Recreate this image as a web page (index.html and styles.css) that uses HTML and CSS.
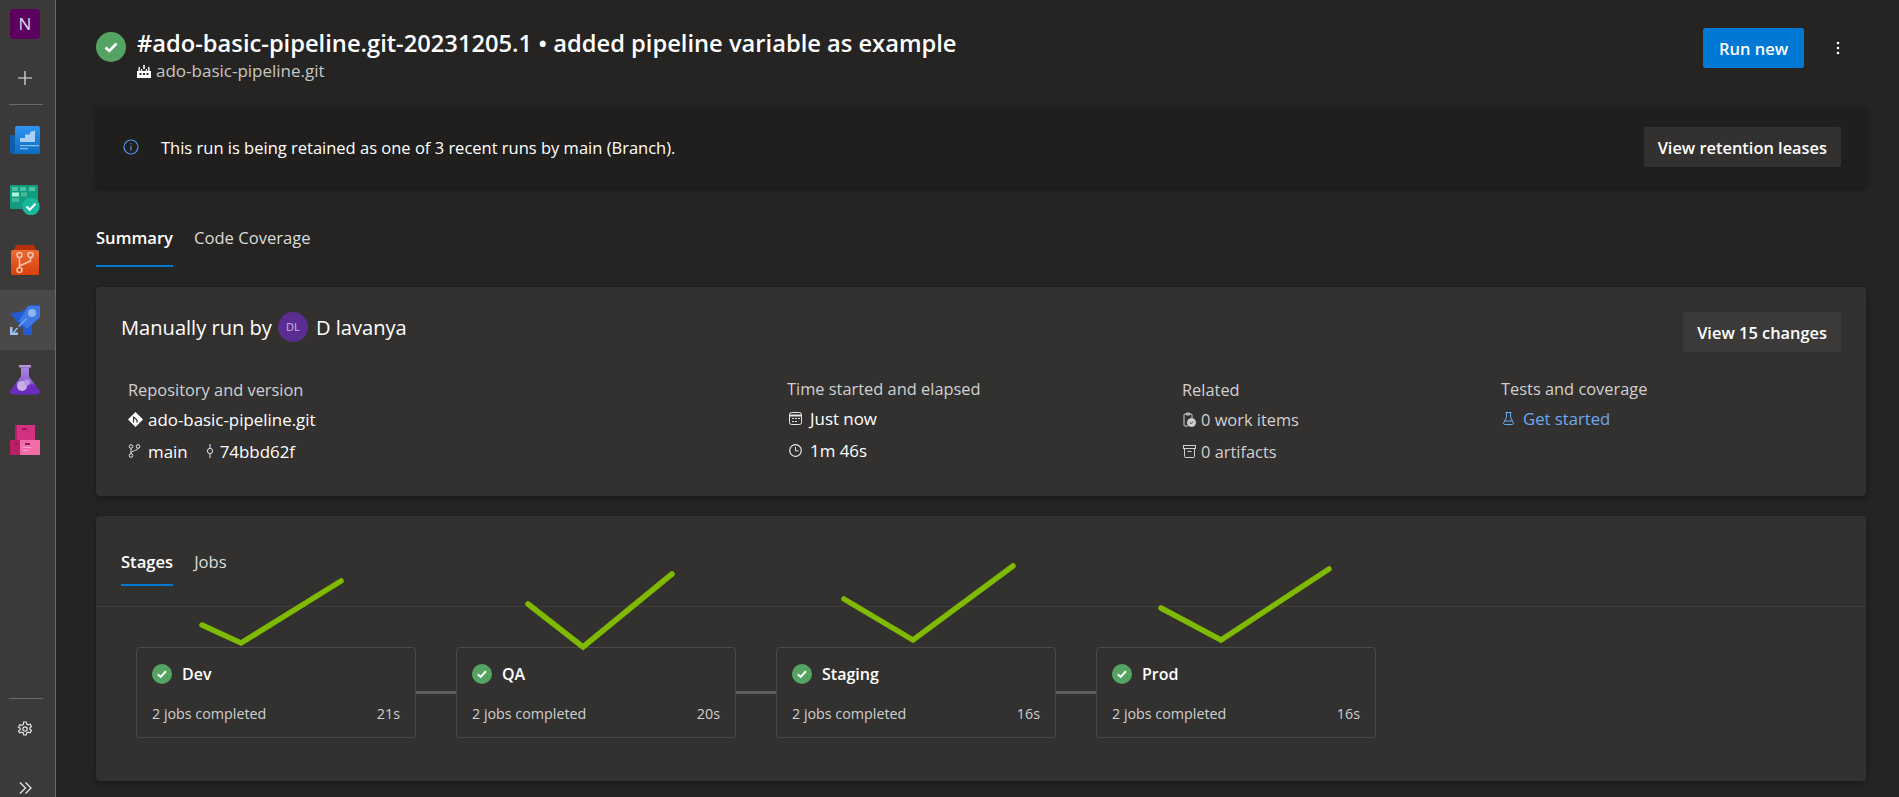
FILE: index.html
```html
<!DOCTYPE html>
<html lang="en">

<head>
    <meta charset="UTF-8">
    <title>ado-basic-pipeline.git run summary</title>
    <link rel="stylesheet" href="styles.css">
</head>

<body>
    <nav class="rail">
        <div class="org">N</div>
        <div class="rail-plus">
            <svg width="14" height="14" viewBox="0 0 14 14"><path d="M7 0v14M0 7h14" stroke="#e6e6e6" stroke-width="1.200" /></svg>
        </div>
        <div class="rail-sep"></div>

        <!-- Overview -->
        <div class="rail-item">
            <svg width="30" height="30" viewBox="0 0 30 30">
                <defs>
                    <linearGradient id="ovr" x1="0" y1="0" x2="0" y2="1">
                        <stop offset="0" stop-color="#2f93f2" />
                        <stop offset="1" stop-color="#0e6cc0" />
                    </linearGradient>
                </defs>
                <path d="M0 10h8v19H2a2 2 0 0 1-2-2z" fill="#0f5ea8" />
                <path d="M5 3a2 2 0 0 1 2-2h21a2 2 0 0 1 2 2v24a2 2 0 0 1-2 2H2a3 3 0 0 0 3-3z" fill="url(#ovr)" />
                <path d="M10 17v-4h5V9.500h5V7l5-1.500V17z" fill="#a9d3f5" />
                <path d="M10 20h19v1.200H10zM10 23h8v1.200h-8z" fill="#84c0f0" />
            </svg>
        </div>

        <!-- Boards -->
        <div class="rail-item">
            <svg width="30" height="30" viewBox="0 0 30 30">
                <rect x="0" y="0" width="28" height="24" rx="1" fill="#119d80" />
                <path d="M2 2h6v4H2zM10 2h6v4h-6zM19 2h6v4h-6z" fill="#4dbfa3" />
                <path d="M2 7.500h7v4H2z" fill="#a8f5de" />
                <path d="M11 7.500h6v4h-6zM2 13h7v4H2z" fill="#45b99c" />
                <circle cx="21" cy="21.500" r="8.700" fill="#18b89b" />
                <path d="M16.500 21.500l3.200 3.200 5.800-6" fill="none" stroke="#fff" stroke-width="2.200" />
            </svg>
        </div>

        <!-- Repos -->
        <div class="rail-item">
            <svg width="30" height="30" viewBox="0 0 30 30">
                <defs>
                    <linearGradient id="rep" x1="0" y1="0" x2="0" y2="1">
                        <stop offset="0" stop-color="#ec6a32" />
                        <stop offset="1" stop-color="#d9400c" />
                    </linearGradient>
                </defs>
                <path d="M4 5l2-5h18l2 5z" fill="#b5300c" />
                <rect x="1" y="5" width="28" height="25" rx="1.500" fill="url(#rep)" />
                <g fill="none" stroke="#f7c4ae" stroke-width="1.500">
                    <circle cx="9.500" cy="10" r="2.500" />
                    <circle cx="9.500" cy="25" r="2.500" />
                    <circle cx="20.500" cy="10" r="2.500" />
                    <path d="M9.500 12.500v10M20.500 12.500v3.500L9.500 21" />
                </g>
            </svg>
        </div>

        <!-- Pipelines -->
        <div class="rail-item rail-active">
            <svg width="30" height="30" viewBox="0 0 30 30">
                <path d="M0 8l11-1L20 0h10v12l-8 8v10h-9v-7l-5-5z" fill="#2459d4" />
                <path d="M18 1h12v11L17 24l-8-8z" fill="#3d78e4" />
                <circle cx="22" cy="8" r="4" fill="#8fb4f2" />
                <path d="M8 21l8-8 1.200 1.200-8 8z" fill="#6f9fee" />
                <path d="M0 22h2.500v5.500H8V30H0z" fill="#9fc0f4" />
                <path d="M2.500 27.500l4.500-5 1 1-4 4.500z" fill="#9fc0f4" />
            </svg>
        </div>

        <!-- Test plans -->
        <div class="rail-item">
            <svg width="30" height="30" viewBox="0 0 30 30">
                <defs>
                    <linearGradient id="tst" x1="0" y1="0" x2="0" y2="1">
                        <stop offset="0" stop-color="#ab86de" />
                        <stop offset=".55" stop-color="#8f60d0" />
                        <stop offset=".68" stop-color="#6b2cc0" />
                        <stop offset="1" stop-color="#6b2cc0" />
                    </linearGradient>
                </defs>
                <rect x="9" y="0" width="12" height="2.500" fill="#b893de" />
                <path d="M11 2.500h8v9l10.500 14a2.500 2.500 0 0 1-2 4h-25a2.500 2.500 0 0 1-2-4L11 11.500z" fill="url(#tst)" />
                <circle cx="12" cy="21" r="5" fill="#c8aeea" />
                <circle cx="17" cy="17.500" r="3" fill="#b698e2" />
            </svg>
        </div>

        <!-- Artifacts -->
        <div class="rail-item">
            <svg width="30" height="30" viewBox="0 0 30 30">
                <rect x="5" y="0" width="20" height="15" fill="#d42f80" />
                <rect x="5" y="0" width="2" height="15" fill="#b81f66" />
                <rect x="0" y="15" width="12" height="15" fill="#b81f66" />
                <rect x="10" y="15" width="20" height="15" fill="#f06da8" />
                <path d="M12 3h5v2h-5zM5 18h3v2H5zM15 18h5v2h-5z" fill="#971855" />
                <path d="M13 22h8v1h-8zM13 25h5v1h-5z" fill="#f7a8cb" />
            </svg>
        </div>

        <div class="rail-bottom">
            <div class="rail-sep rail-sep-low"></div>
            <div class="rail-gear">
                <svg width="16" height="16" viewBox="0 0 16 16" fill="none" stroke="#e6e6e6" stroke-width="1.200">
                    <path d="M6.700 1h2.600l.4 2 1.500.9 2-.7 1.300 2.300-1.600 1.300v1.400l1.600 1.300-1.300 2.300-2-.7-1.500.9-.4 2H6.700l-.4-2-1.500-.9-2 .7L1.500 10l1.600-1.300V7.300L1.500 6l1.300-2.300 2 .7 1.500-.9z" />
                    <circle cx="8" cy="8" r="2.200" />
                </svg>
            </div>
            <div class="rail-expand">
                <svg width="13" height="12" viewBox="0 0 13 12" fill="none" stroke="#e6e6e6" stroke-width="1.300"><path d="M1 .5L6.500 6 1 11.500M6.500 .5L12 6l-5.500 5.500" /></svg>
            </div>
        </div>
    </nav>

    <main class="page">
        <header class="head">
            <svg class="status-big" width="30" height="30" viewBox="0 0 30 30">
                <circle cx="15" cy="15" r="15" fill="#55a362" />
                <path d="M9.500 15.500l3.800 3.500 7.200-7.500" fill="none" stroke="#fff" stroke-width="2.600" />
            </svg>
            <div class="head-text">
                <h1>#ado-basic-pipeline.git-20231205.1 • added pipeline variable as example</h1>
                <div class="head-sub">
                    <svg width="14" height="13" viewBox="0 0 14 13" fill="#fff"><path d="M6.200 0h1.600v4H6.200zM1.500 2h1.400v4H1.500zM11.100 2h1.400v4h-1.400zM3.900 4h1.400v3H3.900zM8.700 4h1.400v3H8.700zM0 6h14v7H0z" /><path d="M2.500 8h2v2h-2zM9.500 8h2v2h-2zM6 8h2v2H6z" fill="#252423" /></svg>
                    <span>ado-basic-pipeline.git</span>
                </div>
            </div>
            <button class="btn-primary">Run new</button>
            <svg class="more" width="4" height="14" viewBox="0 0 4 14" fill="#fff"><circle cx="2" cy="2" r="1.300" /><circle cx="2" cy="7" r="1.300" /><circle cx="2" cy="12" r="1.300" /></svg>
        </header>

        <section class="banner">
            <svg width="16" height="16" viewBox="0 0 16 16" fill="none" stroke="#4f94ef" stroke-width="1.200"><circle cx="8" cy="8" r="7" /><path d="M8 7v4.500M8 4.200v1.400" /></svg>
            <p>This run is being retained as one of 3 recent runs by main (Branch).</p>
            <button class="btn">View retention leases</button>
        </section>

        <div class="tabs page-tabs">
            <span class="tab tab-on">Summary</span>
            <span class="tab">Code Coverage</span>
        </div>

        <section class="card summary">
            <div class="summary-top">
                <div class="run-by">
                    <span>Manually run by</span>
                    <span class="avatar">DL</span>
                    <span>D lavanya</span>
                </div>
                <button class="btn">View 15 changes</button>
            </div>
            <div class="facts">
                <div class="fact fact-repo">
                    <div class="fact-label">Repository and version</div>
                    <div class="fact-row">
                        <svg width="15" height="15" viewBox="0 0 15 15"><path d="M7.500 0L15 7.500 7.500 15 0 7.500z" fill="#fff" /><path d="M5.500 4.500v6M5.500 5l3.500 3v2.500" stroke="#323130" stroke-width="1.200" fill="none" /></svg>
                        <span>ado-basic-pipeline.git</span>
                    </div>
                    <div class="fact-row">
                        <svg class="branch" width="13" height="14" viewBox="0 0 13 14" fill="none" stroke="#e6e6e6"><circle cx="3" cy="2.500" r="1.800" /><circle cx="3" cy="11.500" r="1.800" /><circle cx="10" cy="2.500" r="1.800" /><path d="M3 4.500v5M10 4.500c0 2-7 2-7 5" /></svg>
                        <span>main</span>
                        <svg class="commit" width="8" height="14" viewBox="0 0 8 14" fill="none" stroke="#e6e6e6"><circle cx="4" cy="7" r="2.600" /><path d="M4 0v4.400M4 9.600V14" /></svg>
                        <span>74bbd62f</span>
                    </div>
                </div>
                <div class="fact fact-time">
                    <div class="fact-label">Time started and elapsed</div>
                    <div class="fact-row">
                        <svg width="13" height="13" viewBox="0 0 13 13" fill="none" stroke="#e6e6e6"><rect x=".5" y=".5" width="12" height="12" rx="2" /><path d="M.5 3.500h12" stroke-width="2" /><path d="M3 6.500h2M6 6.500h2M9 6.500h2M3 9.500h2M6 9.500h2" /></svg>
                        <span>Just now</span>
                    </div>
                    <div class="fact-row">
                        <svg width="13" height="13" viewBox="0 0 13 13" fill="none" stroke="#e6e6e6"><circle cx="6.500" cy="6.500" r="5.800" stroke-width="1.200" /><path d="M6.500 3v3.800h3" /></svg>
                        <span>1m 46s</span>
                    </div>
                </div>
                <div class="fact fact-related">
                    <div class="fact-label">Related</div>
                    <div class="fact-row dim">
                        <svg width="13" height="15" viewBox="0 0 13 15" fill="none" stroke="#cfcfcf"><path d="M5 14H2a1 1 0 0 1-1-1V3a1 1 0 0 1 1-1h6a1 1 0 0 1 1 1v3M3.500 1h3v2h-3z" /><circle cx="8.500" cy="10.500" r="4" fill="#cfcfcf" /><path d="M6.800 10.500l1.200 1.200 2-2" stroke="#323130" /></svg>
                        <span>0 work items</span>
                    </div>
                    <div class="fact-row dim">
                        <svg width="13" height="13" viewBox="0 0 13 13" fill="none" stroke="#cfcfcf"><rect x=".5" y=".5" width="12" height="3" /><path d="M1.500 3.500v8a1 1 0 0 0 1 1h8a1 1 0 0 0 1-1v-8M4.500 6.500h4" /></svg>
                        <span>0 artifacts</span>
                    </div>
                </div>
                <div class="fact fact-tests">
                    <div class="fact-label">Tests and coverage</div>
                    <div class="fact-row link">
                        <svg width="11" height="13" viewBox="0 0 11 13" fill="none" stroke="#6ea8ef"><path d="M2.500.5h6M3.500.5v4.500L.7 11a1 1 0 0 0 1 1.500h7.600a1 1 0 0 0 1-1.500L7.500 5V.5M2 9h7" /></svg>
                        <span>Get started</span>
                    </div>
                </div>
            </div>
        </section>

        <section class="card stages">
            <div class="tabs stage-tabs">
                <span class="tab tab-on">Stages</span>
                <span class="tab">Jobs</span>
            </div>
            <div class="stage-list">
                <div class="stage">
                    <div class="stage-name"><svg width="20" height="20" viewBox="0 0 20 20"><circle cx="10" cy="10" r="10" fill="#55a362" /><path d="M5.800 10.300l2.800 2.600 5.300-5.600" fill="none" stroke="#fff" stroke-width="2" /></svg><span>Dev</span></div>
                    <div class="stage-meta"><span>2 jobs completed</span><span>21s</span></div>
                </div>
                <div class="link-line"></div>
                <div class="stage">
                    <div class="stage-name"><svg width="20" height="20" viewBox="0 0 20 20"><circle cx="10" cy="10" r="10" fill="#55a362" /><path d="M5.800 10.300l2.800 2.600 5.300-5.600" fill="none" stroke="#fff" stroke-width="2" /></svg><span>QA</span></div>
                    <div class="stage-meta"><span>2 jobs completed</span><span>20s</span></div>
                </div>
                <div class="link-line"></div>
                <div class="stage">
                    <div class="stage-name"><svg width="20" height="20" viewBox="0 0 20 20"><circle cx="10" cy="10" r="10" fill="#55a362" /><path d="M5.800 10.300l2.800 2.600 5.300-5.600" fill="none" stroke="#fff" stroke-width="2" /></svg><span>Staging</span></div>
                    <div class="stage-meta"><span>2 jobs completed</span><span>16s</span></div>
                </div>
                <div class="link-line"></div>
                <div class="stage">
                    <div class="stage-name"><svg width="20" height="20" viewBox="0 0 20 20"><circle cx="10" cy="10" r="10" fill="#55a362" /><path d="M5.800 10.300l2.800 2.600 5.300-5.600" fill="none" stroke="#fff" stroke-width="2" /></svg><span>Prod</span></div>
                    <div class="stage-meta"><span>2 jobs completed</span><span>16s</span></div>
                </div>
            </div>
        </section>
    </main>

    <!-- Green ticks drawn over the screenshot by hand -->
    <svg class="ticks" width="1899" height="797" viewBox="0 0 1899 797" fill="none" stroke="#7fba00" stroke-width="5.500" stroke-linecap="round" stroke-linejoin="miter">
        <path d="M202 625L241 643L341 581" />
        <path d="M528 604L583 647L672 574" />
        <path d="M844 599L913 640L1013 566" />
        <path d="M1161 608L1221 640L1329 569" />
    </svg>
</body>

</html>
```

FILE: styles.css
```css
html,
body {
    height: 100%;
}

body {
    margin: 0;
    display: flex;
    overflow: hidden;
    background-color: #252423;
    color: #fff;
    font-family: "Open Sans", "Noto Sans", sans-serif;
    font-size: 14px;
}

/* left rail */
.rail {
    width: 55px;
    flex: none;
    display: flex;
    flex-direction: column;
    align-items: center;
    background-color: #3b3a39;
    border-right: 1px solid #6a6968;
}

.org {
    width: 30px;
    height: 30px;
    margin: 9px 5px 0 0;
    border-radius: 4px;
    background-color: #5c0060;
    color: #e8d8ea;
    font-size: 17px;
    line-height: 30px;
    text-align: center;
}

.rail-plus {
    height: 40px;
    margin: 19px 5px 0 0;
    display: flex;
    align-items: center;
}

.rail-sep {
    width: 34px;
    height: 1px;
    flex: none;
    margin: 6px 3px 5px 0;
    background-color: #6a6968;
}

.rail-sep-low {
    margin: 0 3px 0 0;
}

.rail-item {
    width: 100%;
    height: 60px;
    flex: none;
    box-sizing: border-box;
    padding-right: 5px;
    display: flex;
    align-items: center;
    justify-content: center;
}

.rail-active {
    background-color: #4a4948;
}

.rail-bottom {
    margin-top: auto;
    width: 100%;
    display: flex;
    flex-direction: column;
    align-items: center;
}

.rail-gear,
.rail-expand {
    width: 100%;
    box-sizing: border-box;
    padding-right: 5px;
    display: flex;
    align-items: center;
    justify-content: center;
}

.rail-gear {
    height: 60px;
}

.rail-expand {
    height: 18px;
    margin-top: 20px;
}

/* page */
.page {
    flex: 1;
    padding: 0 33px 0 40px;
    min-width: 0;
}

.head {
    display: flex;
    align-items: flex-start;
    height: 107px;
    box-sizing: border-box;
    padding-top: 28px;
}

.status-big {
    flex: none;
    margin: 4px 11px 0 0;
}

.head-text {
    flex: 1;
}

h1 {
    margin: 0;
    font-size: 23.7px;
    line-height: 30px;
    font-weight: 600;
}

.head-sub {
    display: flex;
    align-items: center;
    gap: 5px;
    margin-top: 3px;
    font-size: 17px;
    line-height: 20px;
    color: #c8c6c4;
}

.btn-primary,
.btn {
    border: 0;
    border-radius: 2px;
    font-family: inherit;
    font-weight: 600;
    color: #fff;
    height: 40px;
}

.btn-primary {
    width: 101px;
    background-color: #0078d4;
    font-size: 16.500px;
}

.btn {
    padding: 0 14px;
    background-color: #323130;
    font-size: 16.400px;
}

.more {
    margin: 13px 26px 0 32px;
}

.banner {
    display: flex;
    align-items: center;
    height: 80px;
    padding: 0 25px 0 27px;
    background-color: #201f1e;
    border-radius: 4px;
    box-shadow: 0 2px 6px rgba(0, 0, 0, .35);
}

.banner p {
    flex: 1;
    margin: 0 0 0 22px;
    font-size: 16.500px;
}

.tabs {
    display: flex;
    gap: 21px;
}

.tab {
    display: block;
    font-size: 16.600px;
    line-height: 22px;
    color: #dcdcdc;
}

.tab-on {
    color: #fff;
    font-weight: 600;
    box-shadow: 0 2px 0 #0078d4;
}

.page-tabs {
    height: 100px;
    box-sizing: border-box;
    padding-top: 40px;
}

.page-tabs .tab {
    height: 38px;
}

.card {
    background-color: #323130;
    border-radius: 4px;
    box-shadow: 0 2px 6px rgba(0, 0, 0, .35);
}

.summary {
    height: 209px;
    box-sizing: border-box;
    padding: 25px 25px 0;
}

.summary-top {
    display: flex;
    justify-content: space-between;
    align-items: flex-start;
}

.summary-top .btn {
    background-color: #3b3a39;
}

.run-by {
    display: flex;
    align-items: center;
    gap: 6px;
    font-size: 20.100px;
}

.avatar {
    width: 30px;
    height: 30px;
    margin-right: 2px;
    border-radius: 50%;
    background-color: #5c2d91;
    color: #c8b8e0;
    font-size: 11px;
    line-height: 30px;
    text-align: center;
}

.facts {
    display: flex;
    margin-top: 27px;
}

.fact-label {
    font-size: 16.400px;
    line-height: 22px;
    margin-bottom: 2px;
    color: #d0d0d0;
}

.fact-row {
    display: flex;
    align-items: center;
    gap: 5px;
    height: 32px;
    font-size: 16.900px;
}

.fact-repo {
    width: 659px;
    margin-left: 7px;
}

.branch {
    margin-right: 2px;
}

.commit {
    margin: 0 1px 0 13px;
}

.fact-time {
    width: 395px;
    margin-top: -1px;
}

.fact-time .fact-row {
    gap: 8px;
}

.fact-time svg {
    margin-left: 2px;
}

.fact-related {
    width: 319px;
}

.fact-related svg {
    margin-left: 1px;
}

.fact-tests {
    margin-top: -1px;
}

.fact-tests .fact-row {
    gap: 9px;
}

.fact-tests svg {
    margin-left: 2px;
}

.dim {
    color: #d0d0d0;
    font-size: 16.400px;
}

.link {
    color: #6ea8ef;
    font-size: 16.700px;
}

.stages {
    margin-top: 20px;
    height: 265px;
}

.stage-tabs {
    height: 91px;
    box-sizing: border-box;
    padding: 35px 0 0 25px;
    border-bottom: 1px solid #3f3e3d;
}

.stage-tabs .tab {
    height: 33px;
}

.stage-list {
    display: flex;
    align-items: center;
    padding: 40px 0 0 40px;
}

.stage {
    width: 280px;
    height: 91px;
    box-sizing: border-box;
    padding: 16px 15px;
    border: 1px solid #4a4948;
    border-radius: 4px;
}

.stage-name {
    display: flex;
    align-items: center;
    gap: 10px;
    height: 20px;
    font-size: 16px;
    font-weight: 600;
}

.stage-meta {
    display: flex;
    justify-content: space-between;
    margin-top: 20px;
    font-size: 14.300px;
    line-height: 19px;
    color: #cfcfcf;
}

.link-line {
    width: 40px;
    height: 3px;
    background-color: #605e5c;
}

.ticks {
    position: absolute;
    top: 0;
    left: 0;
    pointer-events: none;
}
```
